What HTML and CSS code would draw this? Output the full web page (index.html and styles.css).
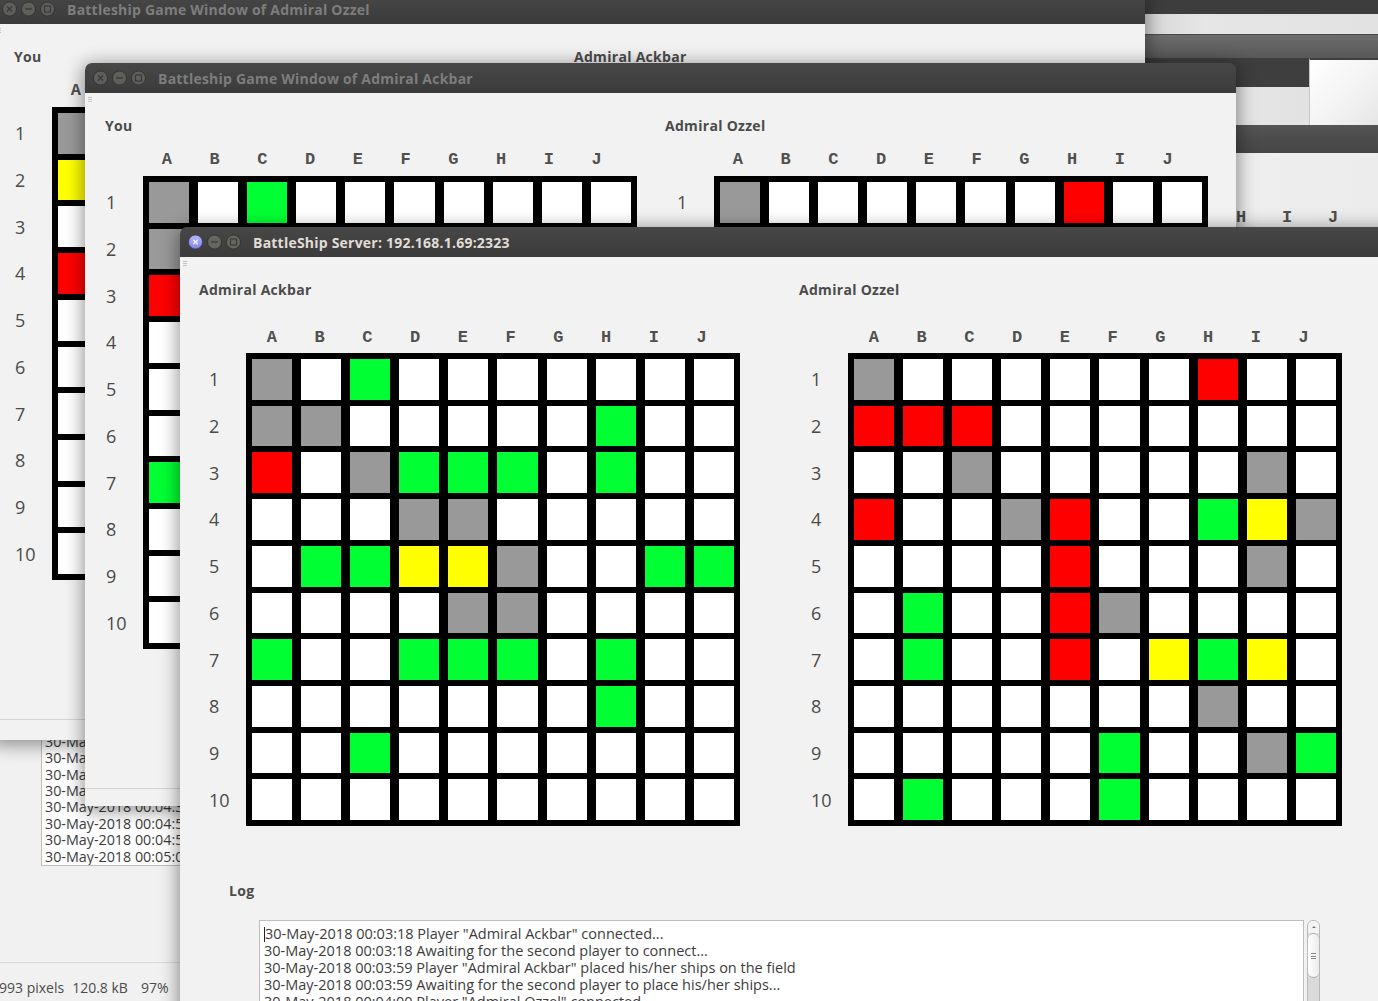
FILE: index.html
```html
<!DOCTYPE html>
<html lang="en">
<head>
<meta charset="utf-8">
<title>BattleShip</title>
<link rel="stylesheet" href="styles.css">
</head>
<body>
<div class="desktop">

  <div class="viewer">
    <div class="oldlog">
      <div>30-May-2018 00:03:59 Awaiting for the second player to place his/her ships...</div>
      <div>30-May-2018 00:04:00 Player "Admiral Ozzel" connected...</div>
      <div>30-May-2018 00:04:31 Player "Admiral Ozzel" placed his/her ships on the field</div>
      <div>30-May-2018 00:04:31 The game begins</div>
      <div>30-May-2018 00:04:35 Admiral Ackbar shoots at A1</div>
      <div>30-May-2018 00:04:52 Admiral Ozzel shoots at A1</div>
      <div>30-May-2018 00:04:57 Admiral Ackbar shoots at H1</div>
      <div>30-May-2018 00:05:02 Admiral Ozzel shoots at A2</div>
    </div>
    <div class="viewer-status">
      <span class="st1">993 pixels</span><span class="st2">120.8 kB</span><span class="st3">97%</span>
    </div>
  </div>

  <div class="rstack">
    <div class="rb1"></div>
    <div class="rb2"></div>
    <div class="rb3"></div>
    <div class="rb4">
      <div class="rb4-left"><div class="rb4-dark"></div><div class="rb4-light"></div></div>
      <div class="rb4-right"></div>
    </div>
    <div class="rb5"></div>
    <div class="rb6"><span>H</span><span>I</span><span>J</span></div>
  </div>

  <!-- Window 1 : Admiral Ozzel -->
  <section class="win game w1">
    <header class="titlebar">
      <svg class="btns" width="54" height="16" viewBox="0 0 54 16">
        <circle cx="7.5" cy="8" r="7" fill="#5e5e5b" stroke="#2e2e2e" stroke-width="0.8"/>
        <path d="M5 5.5L10 10.5M10 5.5L5 10.5" stroke="#393939" stroke-width="1.4"/>
        <circle cx="26.5" cy="8" r="7" fill="#5e5e5b" stroke="#2e2e2e" stroke-width="0.8"/>
        <path d="M23.2 8H29.8" stroke="#393939" stroke-width="1.4"/>
        <circle cx="45.5" cy="8" r="7" fill="#5e5e5b" stroke="#2e2e2e" stroke-width="0.8"/>
        <rect x="42.5" y="5" width="6" height="6" fill="none" stroke="#393939" stroke-width="1.2"/>
      </svg>
      <h1 class="wtitle">Battleship Game Window of Admiral Ozzel</h1>
    </header>
    <div class="wbody">
      <span class="grip"></span>
      <div class="fields">
        <div class="panel pl">
          <h2 class="plabel">You</h2>
          <div class="board bl">
            <div class="letters"><span>A</span><span>B</span><span>C</span><span>D</span><span>E</span><span>F</span><span>G</span><span>H</span><span>I</span><span>J</span></div>
            <div class="nums"><span>1</span><span>2</span><span>3</span><span>4</span><span>5</span><span>6</span><span>7</span><span>8</span><span>9</span><span>10</span></div>
            <div class="cells">
              <i class="g"></i><i></i><i></i><i></i><i></i><i></i><i></i><i class="r"></i><i></i><i></i>
              <i class="y"></i><i class="r"></i><i class="r"></i><i></i><i></i><i></i><i></i><i></i><i></i><i></i>
              <i></i><i></i><i class="g"></i><i></i><i></i><i></i><i></i><i></i><i class="g"></i><i></i>
              <i class="r"></i><i></i><i></i><i class="g"></i><i class="r"></i><i></i><i></i><i class="n"></i><i class="y"></i><i class="g"></i>
              <i></i><i></i><i></i><i></i><i class="r"></i><i></i><i></i><i></i><i class="g"></i><i></i>
              <i></i><i class="n"></i><i></i><i></i><i class="r"></i><i class="g"></i><i></i><i></i><i></i><i></i>
              <i></i><i class="n"></i><i></i><i></i><i class="r"></i><i></i><i class="y"></i><i class="n"></i><i class="y"></i><i></i>
              <i></i><i></i><i></i><i></i><i></i><i></i><i></i><i class="g"></i><i></i><i></i>
              <i></i><i></i><i></i><i></i><i></i><i class="n"></i><i></i><i></i><i class="g"></i><i class="n"></i>
              <i></i><i class="n"></i><i></i><i></i><i></i><i class="n"></i><i></i><i></i><i></i><i></i>
            </div>
          </div>
        </div>
        <div class="panel pr">
          <h2 class="plabel">Admiral Ackbar</h2>
        </div>
      </div>
      <div class="wfoot w1foot"></div>
    </div>
  </section>

  <!-- Window 2 : Admiral Ackbar -->
  <section class="win game w2">
    <header class="titlebar">
      <svg class="btns" width="54" height="16" viewBox="0 0 54 16">
        <circle cx="7.5" cy="8" r="7" fill="#5e5e5b" stroke="#2e2e2e" stroke-width="0.8"/>
        <path d="M5 5.5L10 10.5M10 5.5L5 10.5" stroke="#393939" stroke-width="1.4"/>
        <circle cx="26.5" cy="8" r="7" fill="#5e5e5b" stroke="#2e2e2e" stroke-width="0.8"/>
        <path d="M23.2 8H29.8" stroke="#393939" stroke-width="1.4"/>
        <circle cx="45.5" cy="8" r="7" fill="#5e5e5b" stroke="#2e2e2e" stroke-width="0.8"/>
        <rect x="42.5" y="5" width="6" height="6" fill="none" stroke="#393939" stroke-width="1.2"/>
      </svg>
      <h1 class="wtitle">Battleship Game Window of Admiral Ackbar</h1>
    </header>
    <div class="wbody">
      <span class="grip"></span>
      <div class="fields">
        <div class="panel pl">
          <h2 class="plabel">You</h2>
          <div class="board bl">
            <div class="letters"><span>A</span><span>B</span><span>C</span><span>D</span><span>E</span><span>F</span><span>G</span><span>H</span><span>I</span><span>J</span></div>
            <div class="nums"><span>1</span><span>2</span><span>3</span><span>4</span><span>5</span><span>6</span><span>7</span><span>8</span><span>9</span><span>10</span></div>
            <div class="cells">
              <i class="g"></i><i></i><i class="n"></i><i></i><i></i><i></i><i></i><i></i><i></i><i></i>
              <i class="g"></i><i class="g"></i><i></i><i></i><i></i><i></i><i></i><i class="n"></i><i></i><i></i>
              <i class="r"></i><i></i><i class="g"></i><i class="n"></i><i class="n"></i><i class="n"></i><i></i><i class="n"></i><i></i><i></i>
              <i></i><i></i><i></i><i class="g"></i><i class="g"></i><i></i><i></i><i></i><i></i><i></i>
              <i></i><i class="n"></i><i class="n"></i><i class="y"></i><i class="y"></i><i class="g"></i><i></i><i></i><i class="n"></i><i class="n"></i>
              <i></i><i></i><i></i><i></i><i class="g"></i><i class="g"></i><i></i><i></i><i></i><i></i>
              <i class="n"></i><i></i><i></i><i class="n"></i><i class="n"></i><i class="n"></i><i></i><i class="n"></i><i></i><i></i>
              <i></i><i></i><i></i><i></i><i></i><i></i><i></i><i class="n"></i><i></i><i></i>
              <i></i><i></i><i class="n"></i><i></i><i></i><i></i><i></i><i></i><i></i><i></i>
              <i></i><i></i><i></i><i></i><i></i><i></i><i></i><i></i><i></i><i></i>
            </div>
          </div>
        </div>
        <div class="panel pr">
          <h2 class="plabel">Admiral Ozzel</h2>
          <div class="board br">
            <div class="letters"><span>A</span><span>B</span><span>C</span><span>D</span><span>E</span><span>F</span><span>G</span><span>H</span><span>I</span><span>J</span></div>
            <div class="nums"><span>1</span><span>2</span><span>3</span><span>4</span><span>5</span><span>6</span><span>7</span><span>8</span><span>9</span><span>10</span></div>
            <div class="cells">
              <i class="g"></i><i></i><i></i><i></i><i></i><i></i><i></i><i class="r"></i><i></i><i></i>
              <i class="r"></i><i class="r"></i><i class="r"></i><i></i><i></i><i></i><i></i><i></i><i></i><i></i>
              <i></i><i></i><i class="g"></i><i></i><i></i><i></i><i></i><i></i><i class="g"></i><i></i>
              <i class="r"></i><i></i><i></i><i class="g"></i><i class="r"></i><i></i><i></i><i class="n"></i><i class="y"></i><i class="g"></i>
              <i></i><i></i><i></i><i></i><i class="r"></i><i></i><i></i><i></i><i class="g"></i><i></i>
              <i></i><i class="n"></i><i></i><i></i><i class="r"></i><i class="g"></i><i></i><i></i><i></i><i></i>
              <i></i><i class="n"></i><i></i><i></i><i class="r"></i><i></i><i class="y"></i><i class="n"></i><i class="y"></i><i></i>
              <i></i><i></i><i></i><i></i><i></i><i></i><i></i><i class="g"></i><i></i><i></i>
              <i></i><i></i><i></i><i></i><i></i><i class="n"></i><i></i><i></i><i class="g"></i><i class="n"></i>
              <i></i><i class="n"></i><i></i><i></i><i></i><i class="n"></i><i></i><i></i><i></i><i></i>
            </div>
          </div>
        </div>
      </div>
      <div class="wfoot w2foot"></div>
    </div>
  </section>

  <!-- Window 3 : Server -->
  <section class="win server active">
    <header class="titlebar">
      <svg class="btns" width="54" height="16" viewBox="0 0 54 16">
        <defs>
          <linearGradient id="cl" x1="0" y1="0" x2="0" y2="1">
            <stop offset="0" stop-color="#b4b7fa"/>
            <stop offset="1" stop-color="#7f84ea"/>
          </linearGradient>
        </defs>
        <circle cx="7.5" cy="8" r="7" fill="url(#cl)" stroke="#3a3a55" stroke-width="0.8"/>
        <path d="M5.2 5.7L9.8 10.3M9.8 5.7L5.2 10.3" stroke="#f2f2ff" stroke-width="1.4"/>
        <circle cx="26.5" cy="8" r="7" fill="#66665f" stroke="#2e2e2e" stroke-width="0.8"/>
        <path d="M23.2 8H29.8" stroke="#3a3a3a" stroke-width="1.4"/>
        <circle cx="45.5" cy="8" r="7" fill="#66665f" stroke="#2e2e2e" stroke-width="0.8"/>
        <rect x="42.5" y="5" width="6" height="6" fill="none" stroke="#3a3a3a" stroke-width="1.2"/>
      </svg>
      <h1 class="wtitle">BattleShip Server: 192.168.1.69:2323</h1>
    </header>
    <div class="wbody">
      <span class="grip"></span>
      <div class="fields srv">
        <div class="panel pl">
          <h2 class="plabel">Admiral Ackbar</h2>
          <div class="board bl">
            <div class="letters"><span>A</span><span>B</span><span>C</span><span>D</span><span>E</span><span>F</span><span>G</span><span>H</span><span>I</span><span>J</span></div>
            <div class="nums"><span>1</span><span>2</span><span>3</span><span>4</span><span>5</span><span>6</span><span>7</span><span>8</span><span>9</span><span>10</span></div>
            <div class="cells">
              <i class="g"></i><i></i><i class="n"></i><i></i><i></i><i></i><i></i><i></i><i></i><i></i>
              <i class="g"></i><i class="g"></i><i></i><i></i><i></i><i></i><i></i><i class="n"></i><i></i><i></i>
              <i class="r"></i><i></i><i class="g"></i><i class="n"></i><i class="n"></i><i class="n"></i><i></i><i class="n"></i><i></i><i></i>
              <i></i><i></i><i></i><i class="g"></i><i class="g"></i><i></i><i></i><i></i><i></i><i></i>
              <i></i><i class="n"></i><i class="n"></i><i class="y"></i><i class="y"></i><i class="g"></i><i></i><i></i><i class="n"></i><i class="n"></i>
              <i></i><i></i><i></i><i></i><i class="g"></i><i class="g"></i><i></i><i></i><i></i><i></i>
              <i class="n"></i><i></i><i></i><i class="n"></i><i class="n"></i><i class="n"></i><i></i><i class="n"></i><i></i><i></i>
              <i></i><i></i><i></i><i></i><i></i><i></i><i></i><i class="n"></i><i></i><i></i>
              <i></i><i></i><i class="n"></i><i></i><i></i><i></i><i></i><i></i><i></i><i></i>
              <i></i><i></i><i></i><i></i><i></i><i></i><i></i><i></i><i></i><i></i>
            </div>
          </div>
        </div>
        <div class="panel pr">
          <h2 class="plabel">Admiral Ozzel</h2>
          <div class="board br">
            <div class="letters"><span>A</span><span>B</span><span>C</span><span>D</span><span>E</span><span>F</span><span>G</span><span>H</span><span>I</span><span>J</span></div>
            <div class="nums"><span>1</span><span>2</span><span>3</span><span>4</span><span>5</span><span>6</span><span>7</span><span>8</span><span>9</span><span>10</span></div>
            <div class="cells">
              <i class="g"></i><i></i><i></i><i></i><i></i><i></i><i></i><i class="r"></i><i></i><i></i>
              <i class="r"></i><i class="r"></i><i class="r"></i><i></i><i></i><i></i><i></i><i></i><i></i><i></i>
              <i></i><i></i><i class="g"></i><i></i><i></i><i></i><i></i><i></i><i class="g"></i><i></i>
              <i class="r"></i><i></i><i></i><i class="g"></i><i class="r"></i><i></i><i></i><i class="n"></i><i class="y"></i><i class="g"></i>
              <i></i><i></i><i></i><i></i><i class="r"></i><i></i><i></i><i></i><i class="g"></i><i></i>
              <i></i><i class="n"></i><i></i><i></i><i class="r"></i><i class="g"></i><i></i><i></i><i></i><i></i>
              <i></i><i class="n"></i><i></i><i></i><i class="r"></i><i></i><i class="y"></i><i class="n"></i><i class="y"></i><i></i>
              <i></i><i></i><i></i><i></i><i></i><i></i><i></i><i class="g"></i><i></i><i></i>
              <i></i><i></i><i></i><i></i><i></i><i class="n"></i><i></i><i></i><i class="g"></i><i class="n"></i>
              <i></i><i class="n"></i><i></i><i></i><i></i><i class="n"></i><i></i><i></i><i></i><i></i>
            </div>
          </div>
        </div>
      </div>
      <div class="logsec">
        <h2 class="plabel">Log</h2>
        <div class="logrow">
          <div class="logbox">
            <div><span class="caret"></span>30-May-2018 00:03:18 Player "Admiral Ackbar" connected...</div>
            <div>30-May-2018 00:03:18 Awaiting for the second player to connect...</div>
            <div>30-May-2018 00:03:59 Player "Admiral Ackbar" placed his/her ships on the field</div>
            <div>30-May-2018 00:03:59 Awaiting for the second player to place his/her ships...</div>
            <div>30-May-2018 00:04:00 Player "Admiral Ozzel" connected...</div>
            <div>30-May-2018 00:04:31 Player "Admiral Ozzel" placed his/her ships on the field</div>
          </div>
          <div class="vscroll">
            <div class="vs-up"></div>
            <div class="vs-thumb"><span></span></div>
            <div class="vs-track"></div>
          </div>
        </div>
      </div>
    </div>
  </section>

</div>
</body>
</html>
```

FILE: styles.css
```css
* { box-sizing: border-box; margin: 0; padding: 0; }

html, body {
  width: 1378px;
  height: 1001px;
  overflow: hidden;
  background: #f1f1f1;
  font-family: "Open Sans", "DejaVu Sans", sans-serif;
  color: #4b4b4b;
}

.desktop {
  position: relative;
  width: 1378px;
  height: 1001px;
  overflow: hidden;
}

/* ---------- background image viewer ---------- */
.viewer {
  position: absolute;
  inset: 0;
  background: #f1f1f1;
  display: flex;
  flex-direction: column;
  justify-content: flex-end;
}
.viewer-status {
  height: 39px;
  border-top: 1px solid #d9d9d9;
  display: flex;
  padding-top: 16px;
  font-size: 14px;
  line-height: 18px;
  color: #4c4c4c;
  white-space: nowrap;
}
.st1 { margin-left: -1px; }
.st2 { margin-left: 8px; }
.st3 { margin-left: 13px; }

.oldlog {
  position: absolute;
  left: 41px;
  top: 700px;
  width: 330px;
  height: 166px;
  background: #fff;
  border: 1px solid #bdbdbd;
  padding-left: 3px;
  display: flex;
  flex-direction: column;
  justify-content: flex-end;
  font-size: 14.3px;
  line-height: 16.4px;
  color: #3c3c3c;
  white-space: nowrap;
  overflow: hidden;
}

/* ---------- stacked windows at the top right ---------- */
.rstack {
  position: absolute;
  left: 1145px;
  top: 0;
  width: 233px;
  height: 240px;
  display: flex;
  flex-direction: column;
}
.rb1 { height: 14px; background: #3d3d3d; }
.rb2 { height: 21px; background: linear-gradient(90deg, #d6d6d6, #e6e6e6 25%, #e2e2e2); border-bottom: 1px solid #4a4a4a; }
.rb3 { height: 23px; background: linear-gradient(#6c6c6c, #585858); }
.rb4 { height: 67px; display: flex; }
.rb4-left { width: 164px; display: flex; flex-direction: column; }
.rb4-dark { height: 29px; background: #3e3e3e; }
.rb4-light { flex: 1; background: linear-gradient(90deg, #d2d2d2, #e6e6e6 40%, #e2e2e2); }
.rb4-right {
  flex: 1;
  border-top: 2px solid #3e3e3e;
  border-left: 1px solid #c8c8c8;
  background: linear-gradient(135deg, #ffffff, #f2f2f2 60%, #e6e6e6);
}
.rb5 { height: 28px; background: linear-gradient(#545454, #454545); }
.rb6 {
  flex: 1;
  background: linear-gradient(90deg, #dcdcdc, #eeeeee 20%, #ececec);
  display: grid;
  grid-template-columns: repeat(3, 46px);
  padding: 55px 0 0 73px;
  font-family: "Liberation Mono", "Courier New", monospace;
  font-weight: 700;
  font-size: 17px;
  line-height: 20px;
  color: #505050;
  text-align: center;
  align-content: start;
}

/* ---------- windows ---------- */
.win {
  position: absolute;
  display: flex;
  flex-direction: column;
  border-radius: 7px 7px 0 0;
  box-shadow: 0 3px 18px 2px rgba(0, 0, 0, 0.42);
}
.w1 { left: -6px; top: -6px; width: 1151px; height: 746px; }
.w2 { left: 85px; top: 63px; width: 1151px; height: 743px; }
.server { left: 180px; top: 227px; width: 1240px; height: 800px; }

.titlebar {
  flex: none;
  height: 30px;
  display: flex;
  align-items: center;
  padding-left: 8px;
  border-radius: 7px 7px 0 0;
  background: linear-gradient(#474747, #3b3b3b);
}
.btns { flex: none; display: block; }
.wtitle {
  margin-left: 11px;
  font-size: 14px;
  font-weight: 700;
  letter-spacing: 0.22px;
  color: #7d7d7d;
  white-space: nowrap;
}
.active .wtitle { color: #e0ddd6; }

.wbody {
  flex: 1;
  position: relative;
  background: #f2f2f2;
  display: flex;
  flex-direction: column;
}
.grip {
  position: absolute;
  left: 3px;
  top: 4px;
  width: 4px;
  height: 6px;
  background: repeating-linear-gradient(#c4c4c4 0 1px, transparent 1px 2px);
}

.fields {
  display: flex;
  padding: 24px 0 0 20px;
}
.fields .pl { width: 560px; flex: none; }
.fields.srv { padding-left: 19px; }
.fields.srv .pl { width: 600px; }

.plabel {
  height: 18px;
  font-size: 14px;
  line-height: 18px;
  font-weight: 700;
  letter-spacing: 0.3px;
  color: #4b4b4b;
  white-space: nowrap;
}

.wfoot { margin-top: auto; border-top: 1px solid #d4d4d4; }
.w1foot { height: 21px; }
.w2foot { height: 18px; }

/* ---------- boards ---------- */
.board {
  --top: 13px;
  --lg: 8px;
  --lx: 0px;
  display: grid;
  grid-template-columns: 37px 494px;
  grid-template-rows: 20px 473px;
  row-gap: var(--lg);
  margin-top: var(--top);
}
.srv .board { --top: 27px; --lg: 7px; --lx: 2px; }
.board.bl { margin-left: 1px; }
.board.br { margin-left: 12px; }
.srv .board.bl { margin-left: 10px; }
.srv .board.br { margin-left: 12px; }

.letters {
  grid-column: 2;
  grid-row: 1;
  display: grid;
  grid-template-columns: repeat(10, 47.75px);
  padding-left: var(--lx);
  font-family: "Liberation Mono", "Courier New", monospace;
  font-weight: 700;
  font-size: 17px;
  line-height: 24px;
  color: #505050;
  text-align: center;
}
.nums {
  grid-column: 1;
  grid-row: 2;
  display: grid;
  grid-template-rows: repeat(10, 1fr);
  row-gap: 6px;
  padding: 6px 0;
  align-items: center;
  font-size: 18px;
  line-height: 22px;
  color: #4a4a4a;
}
.cells {
  grid-column: 2;
  grid-row: 2;
  background: #000;
  padding: 6px;
  display: grid;
  grid-template-columns: repeat(10, 1fr);
  grid-template-rows: repeat(10, 1fr);
  gap: 6px 9px;
}
.cells i { display: block; background: #fff; }
.cells i.g { background: #999999; }
.cells i.n { background: #00ff33; }
.cells i.r { background: #ff0000; }
.cells i.y { background: #ffff00; }

/* ---------- server log ---------- */
.logsec { padding: 56px 0 0 49px; }
.logrow {
  display: flex;
  margin-top: 20px;
  padding-left: 30px;
}
.logbox {
  width: 1045px;
  height: 200px;
  background: #fff;
  border: 1px solid #bdbdbd;
  padding: 4px 0 0 4px;
  font-size: 14.5px;
  line-height: 17px;
  color: #3c3c3c;
  white-space: nowrap;
  overflow: hidden;
}
.caret {
  display: inline-block;
  width: 1px;
  height: 15px;
  vertical-align: -3px;
  background: #222;
}
.vscroll {
  width: 13px;
  margin-left: 3px;
  height: 200px;
  display: flex;
  flex-direction: column;
  border: 1px solid #b8b8b8;
  border-radius: 6px 6px 0 0;
  background: #e2e2e2;
  overflow: hidden;
}
.vs-up {
  height: 12px;
  background: #f4f4f4;
  position: relative;
}
.vs-up::after {
  content: "";
  position: absolute;
  left: 4px;
  top: 5px;
  border-left: 2px solid transparent;
  border-right: 2px solid transparent;
  border-bottom: 2px solid #777;
}
.vs-thumb {
  height: 45px;
  background: linear-gradient(90deg, #ffffff, #ececec);
  border-top: 1px solid #aaa;
  border-bottom: 1px solid #aaa;
  border-radius: 6px;
  display: flex;
  align-items: center;
  justify-content: center;
}
.vs-thumb span {
  width: 5px;
  height: 6px;
  background: repeating-linear-gradient(#888 0 1px, transparent 1px 2.5px);
}
.vs-track { flex: 1; background: #dadada; }
```
